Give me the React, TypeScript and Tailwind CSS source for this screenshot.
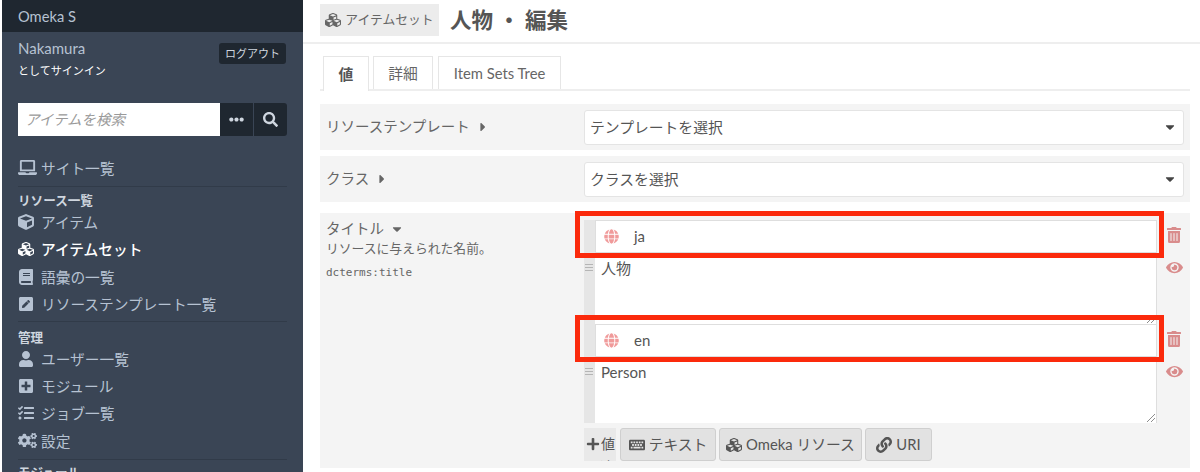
import { FaBook, FaCaretDown, FaCaretRight, FaCogs, FaCube, FaCubes, FaEllipsisH, FaEye, FaGlobe, FaKeyboard, FaLaptop, FaLink, FaPenSquare, FaPlus, FaPlusSquare, FaSearch, FaTasks, FaTrashAlt, FaUser } from "react-icons/fa";
import type { IconType } from "react-icons";

const FONT = "font-['Lato','Noto_Sans_CJK_JP',sans-serif]";

function NavItem({ icon: Icon, label, active, iconClass = "w-[16px] h-[16px]" }: { icon: IconType; label: string; active?: boolean; iconClass?: string }) {
  return (
    <div className={`flex items-center h-[27.4px] text-[14.7px] ${active ? "text-white font-medium" : "text-[#b6c2d2]"}`}>
      <span className="w-[23px] flex-shrink-0 flex items-center">
        <Icon className={iconClass} />
      </span>
      {label}
    </div>
  );
}

function Sidebar() {
  return (
    <aside className="w-[301px] ml-[2px] flex-shrink-0 bg-[#3a4555] h-[472px] overflow-hidden">
      <div className="h-[32px] bg-[#1f2730] pl-[16px] text-[14.7px] leading-[32px] text-[#b6c2d2]">Omeka S</div>
      <div className="px-[16px]">
        <div className="flex justify-between pt-[5px] h-[71px]">
          <div>
            <div className="text-[15px] leading-[22px] text-[#b6c2d2]">Nakamura</div>
            <div className="text-[11px] leading-[24px] text-white">としてサインイン</div>
          </div>
          <div className="mt-[6px] h-[21px] w-[67px] rounded-[3px] bg-[#1f2730] text-[#cfd6df] text-[11px] leading-[21px] text-center mr-[1px]">ログアウト</div>
        </div>
        <div className="flex h-[33px]">
          <div className="w-[202px] bg-white pl-[7px] text-[14.5px] leading-[33px] italic text-[#9a9a9a]">アイテムを検索</div>
          <div className="w-[33px] bg-[#1f2730] flex items-center justify-center text-[#cfd6df]">
            <FaEllipsisH className="w-[15px] h-[15px]" />
          </div>
          <div className="w-[33px] ml-px bg-[#1f2730] rounded-r-[3px] flex items-center justify-center text-[#cfd6df]">
            <FaSearch className="w-[15px] h-[15px]" />
          </div>
        </div>
        <div className="mt-[18px] pb-[5px] border-b border-[#313b49]">
          <NavItem icon={FaLaptop} label="サイト一覧" iconClass="w-[19px] h-[19px]" />
        </div>
        <div className="mt-[6px] text-[12.6px] leading-[15px] font-bold text-[#cfd6df]">リソース一覧</div>
        <div className="pb-[3px] border-b border-[#313b49]">
          <NavItem icon={FaCube} label="アイテム" />
          <NavItem icon={FaCubes} label="アイテムセット" active />
          <NavItem icon={FaBook} label="語彙の一覧" />
          <NavItem icon={FaPenSquare} label="リソーステンプレート一覧" />
        </div>
        <div className="mt-[8px] text-[12.6px] leading-[15px] font-bold text-[#cfd6df]">管理</div>
        <div className="pb-[4px] border-b border-[#313b49]">
          <NavItem icon={FaUser} label="ユーザー一覧" />
          <NavItem icon={FaPlusSquare} label="モジュール" />
          <NavItem icon={FaTasks} label="ジョブ一覧" />
          <NavItem icon={FaCogs} label="設定" iconClass="w-[19px] h-[19px]" />
        </div>
        <div className="mt-[5px] text-[12.6px] leading-[15px] font-bold text-[#cfd6df]">モジュール</div>
      </div>
    </aside>
  );
}

function SelectRow({ label, placeholder }: { label: string; placeholder: string }) {
  return (
    <div className="flex items-center h-[46px] bg-[#f4f4f4] mb-[6px]">
      <div className="w-[264px] pl-[6px] flex items-center text-[14.5px] text-[#666]">
        {label}
        <FaCaretRight className="ml-[6px] w-[14px] h-[14px]" />
      </div>
      <div className="w-[600px] h-[35px] flex items-center justify-between bg-white border border-[#e4e4e4] rounded-[3px] pl-[5px] pr-[6px] text-[14.8px] text-[#555]">
        {placeholder}
        <FaCaretDown className="w-[14px] h-[14px] text-[#444]" />
      </div>
    </div>
  );
}

function ValueBlock({ lang, text, height, resize }: { lang: string; text: string; height: number; resize?: boolean }) {
  return (
    <div className="relative flex w-[606px]">
      <div className="w-[573px] flex-shrink-0">
        <div className="flex">
          <div className="w-[11px] bg-[#e6e6e6] flex-shrink-0" />
          <div className="flex-1 bg-white">
            <div className="h-[33px] border border-[#dedede] flex items-center pl-[8px] text-[15px] text-[#555]">
              <FaGlobe className="w-[15px] h-[15px] text-[#f09a9a] mr-[15px]" />
              {lang}
            </div>
          </div>
        </div>
        <div className="flex" style={{ height }}>
          <div className="w-[11px] bg-[#e6e6e6] flex-shrink-0 relative">
            <div className="absolute left-[1px] top-[11px] w-[8px] h-[7px] border-y border-[#b5b5b5]">
              <div className="mt-[2px] h-px bg-[#b5b5b5]" />
            </div>
          </div>
          <div className="flex-1 bg-white relative pl-[6px] pt-[5px] text-[15px] leading-[20px] text-[#555] border-r border-[#dedede]">
            {text}
            {resize && (
              <svg viewBox="0 0 8 8" className="absolute right-[1px] bottom-[1px] w-[8px] h-[8px]" stroke="#8d8d8d" fill="none">
                <path d="M0 8 8 0M4 8 8 4" />
              </svg>
            )}
          </div>
        </div>
      </div>
      <div className="w-[33px] flex flex-col items-center text-[#d98c8c] pl-[1px]">
        <FaTrashAlt className="mt-[7px] w-[14px] h-[16px]" />
        <FaEye className="mt-[17px] w-[17px] h-[15px]" />
      </div>
      {/* annotation frame drawn over the language input */}
      <div className="absolute left-[-9px] top-[-9px] w-[589px] h-[47px] border-[5px] border-[#fb2a0c] pointer-events-none" />
    </div>
  );
}

function AddButton({ icon: Icon, label, width }: { icon: IconType; label: string; width: string }) {
  return (
    <div className={`${width} h-[33px] flex items-center justify-center gap-[4px] rounded-[3px] bg-[#e2e2e2] border border-[#cfcfcf] text-[14.8px] text-[#555]`}>
      <Icon className="w-[16px] h-[16px]" />
      {label}
    </div>
  );
}

function Main() {
  return (
    <main className="flex-1 min-w-0 h-[472px] overflow-hidden">
      <header className="h-[44px] border-b-2 border-[#eeeeee] pt-[4px] pl-[17px] flex items-start">
        <div className="h-[32px] w-[119px] bg-[#ececec] flex items-center justify-center gap-[4px] text-[12.8px] text-[#666]">
          <FaCubes className="w-[16px] h-[16px]" />
          アイテムセット
        </div>
        <h1 className="ml-[11px] text-[21.5px] leading-[33px] font-bold text-[#555]">人物 ・ 編集</h1>
      </header>
      <div className="pl-[17px] pr-[10px]">
        <nav className="flex items-end h-[47px] border-b-[2px] border-[#eeeeee] pl-[3px] text-[14.8px] text-[#666]">
          <div className="w-[46px] h-[35px] mb-[-2px] bg-white border border-b-0 border-[#e6e6e6] flex items-center justify-center font-bold text-[#555]">値</div>
          <div className="w-[60px] h-[33px] ml-[4px] border border-b-0 border-[#e6e6e6] flex items-center justify-center">詳細</div>
          <div className="w-[123px] h-[33px] ml-[5px] border border-b-0 border-[#e6e6e6] flex items-center justify-center">Item Sets Tree</div>
        </nav>
        <div className="mt-[13px]">
          <SelectRow label="リソーステンプレート" placeholder="テンプレートを選択" />
          <SelectRow label="クラス" placeholder="クラスを選択" />
          <div className="mt-[11px] flex h-[255px] bg-[#f4f4f4] pt-[7px]">
            <div className="w-[264px] pl-[6px] flex-shrink-0 text-[#666]">
              <div className="flex items-center text-[14.5px] leading-[18px]">
                タイトル
                <FaCaretDown className="ml-[6px] w-[14px] h-[14px]" />
              </div>
              <div className="text-[12.8px] leading-[20px]">リソースに与えられた名前。</div>
              <div className="mt-[7px] font-['DejaVu_Sans_Mono',monospace] text-[11px] leading-[16px]">dcterms:title</div>
            </div>
            <div className="flex-1 min-w-0">
              <ValueBlock lang="ja" text="人物" height={71} resize />
              <ValueBlock lang="en" text="Person" height={66} resize />
              <div className="flex mt-[5px] h-[33px] items-stretch">
                <div className="w-[32px] bg-[#e9e9e9] text-[14px] leading-[23px] text-[#555] overflow-hidden pl-[2px] pt-[4px]">
                  <div className="flex items-center"><FaPlus className="w-[14px] h-[14px] mr-px" />値</div>
                  <div>を追</div>
                </div>
                <div className="ml-[4px] flex gap-[3px]">
                  <AddButton icon={FaKeyboard} label="テキスト" width="w-[96px]" />
                  <AddButton icon={FaCubes} label="Omeka リソース" width="w-[143px]" />
                  <AddButton icon={FaLink} label="URI" width="w-[67px]" />
                </div>
              </div>
            </div>
          </div>
        </div>
      </div>
    </main>
  );
}

export default function App() {
  return (
    <div className={`flex w-[1200px] h-[472px] overflow-hidden bg-white ${FONT}`}>
      <Sidebar />
      <Main />
    </div>
  );
}
